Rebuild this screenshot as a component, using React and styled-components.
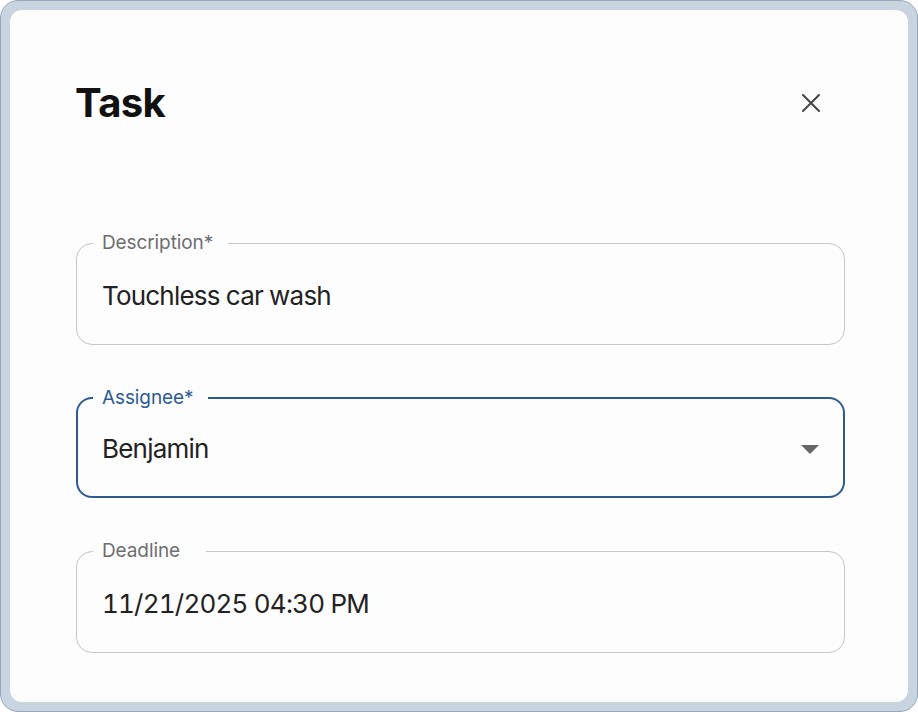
import React from "react";
import styled, { createGlobalStyle } from "styled-components";

const GlobalStyle = createGlobalStyle`
  * { box-sizing: border-box; }
  html, body { margin: 0; padding: 0; height: 100%; }
  body {
    font-family: Inter, "Noto Sans", "Liberation Sans", sans-serif;
    background: #ffffff;
  }
  #root { height: 100%; }
`;

const blue = "#2c5b94";

const Frame = styled.div`
  height: 100vh;
  display: flex;
  padding: 9px;
  background: #c9d4e1;
  border: 1.5px solid #98a6ba;
  border-radius: 18px;
`;

const Card = styled.div`
  flex: 1;
  display: flex;
  flex-direction: column;
  background: #fdfdfd;
  border-radius: 12px;
  padding: 69px 63px 0 66px;
`;

const Header = styled.div`
  display: flex;
  align-items: center;
  justify-content: space-between;
  margin-bottom: 104px;
`;

const Title = styled.h1`
  margin: 0 0 0 -1px;
  font-size: 40px;
  line-height: 48px;
  font-weight: 700;
  color: #111111;
  letter-spacing: -0.6px;
`;

const CloseButton = styled.button`
  width: 44px;
  height: 44px;
  margin-right: 12px;
  display: flex;
  align-items: center;
  justify-content: center;
  border: 0;
  background: transparent;
  padding: 0;
  cursor: pointer;
  color: #444444;
`;

const Form = styled.div`
  display: flex;
  flex-direction: column;
  gap: 41px;
`;

const Fieldset = styled.fieldset`
  margin: 0;
  padding: 0 ${(p) => (p.$focused ? 15 : 16)}px;
  border: ${(p) => (p.$focused ? `2px solid ${blue}` : "1px solid #c6c6c6")};
  border-radius: 16px;
  min-width: 0;
`;

const Legend = styled.legend`
  padding: 0 ${(p) => p.$gap}px 0 9px;
  font-size: 19px;
  line-height: 24px;
  color: ${(p) => (p.$focused ? blue : "#6e6e6e")};
  letter-spacing: -0.1px;
`;

const Content = styled.div`
  display: flex;
  align-items: center;
  justify-content: space-between;
  padding: ${(p) => (p.$focused ? "23px 9px 31px" : "25px 9px 32px")};
  font-size: 26px;
  line-height: 32px;
  color: #222222;
  letter-spacing: -0.8px;
  font-variant-numeric: tabular-nums;
`;

const Arrow = styled.span`
  width: 0;
  height: 0;
  border-left: 9px solid transparent;
  border-right: 9px solid transparent;
  border-top: 9px solid #666666;
`;

const Field = ({ label, value, focused, select, gap = 15 }) => (
  <Fieldset $focused={focused}>
    <Legend $focused={focused} $gap={gap}>{label}</Legend>
    <Content $focused={focused}>
      <span>{value}</span>
      {select && <Arrow />}
    </Content>
  </Fieldset>
);

const App = () => (
  <>
    <GlobalStyle />
    <Frame>
      <Card>
        <Header>
          <Title>Task</Title>
          <CloseButton aria-label="close">
            <svg width="20" height="20" viewBox="0 0 20 20">
              <path d="M2 2 L18 18 M18 2 L2 18" stroke="currentColor" strokeWidth="2" strokeLinecap="round" />
            </svg>
          </CloseButton>
        </Header>
        <Form>
          <Field label="Description*" value="Touchless car wash" />
          <Field label="Assignee*" value="Benjamin" focused select />
          <Field label="Deadline" value="11/21/2025 04:30 PM" gap={26} />
        </Form>
      </Card>
    </Frame>
  </>
);

export default App;
